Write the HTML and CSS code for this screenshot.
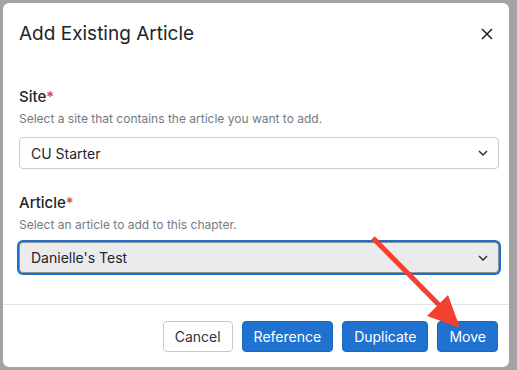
FILE: index.html
```html
<!DOCTYPE html>
<html lang="en">
  <head>
    <meta charset="UTF-8" />
    <title>Add Existing Article</title>
    <link rel="stylesheet" href="styles.css">
  </head>
  <body>
    <div class="modal">
      <div class="modal-header">
        <h2 class="modal-title">Add Existing Article</h2>
        <button class="modal-close" aria-label="Close">
          <svg width="12" height="12" viewBox="0 0 12 12">
            <path d="M1 1L11 11M11 1L1 11" stroke="#222" stroke-width="1.6" fill="none" />
          </svg>
        </button>
      </div>

      <div class="modal-body">
        <div class="form-group">
          <label class="form-label">Site<span class="form-required">*</span></label>
          <p class="form-help">Select a site that contains the article you want to add.</p>
          <div class="form-select">
            <span>CU Starter</span>
            <svg class="form-chevron" width="10" height="6" viewBox="0 0 10 6">
              <path d="M1 1L5 5L9 1" stroke="#333" stroke-width="1.5" fill="none" />
            </svg>
          </div>
        </div>

        <div class="form-group">
          <label class="form-label">Article<span class="form-required">*</span></label>
          <p class="form-help">Select an article to add to this chapter.</p>
          <div class="form-select form-select-focus">
            <span>Danielle's Test</span>
            <svg class="form-chevron" width="10" height="6" viewBox="0 0 10 6">
              <path d="M1 1L5 5L9 1" stroke="#333" stroke-width="1.5" fill="none" />
            </svg>
          </div>
        </div>
      </div>

      <div class="modal-footer">
        <button class="button-cancel">Cancel</button>
        <button class="button-primary">Reference</button>
        <button class="button-primary">Duplicate</button>
        <button class="button-primary">Move</button>
      </div>
    </div>

    <!-- annotation arrow drawn over the screenshot -->
    <svg class="arrow" width="517" height="370" viewBox="0 0 517 370">
      <line x1="373" y1="238" x2="446" y2="312" stroke="#f4402f" stroke-width="5" />
      <polygon points="427,316 448,295 460,328" fill="#f4402f" />
    </svg>
  </body>
</html>
```

FILE: styles.css
```css
* {
  margin: 0;
  padding: 0;
  box-sizing: border-box;
  font-family: "Inter", "Liberation Sans", sans-serif;
}

body {
  width: 517px;
  height: 370px;
  background-color: #a3a3a3;
  padding: 3px 8px 3px 3px;
  overflow: hidden;
  color: #212529;
}

.modal {
  width: 506px;
  height: 364px;
  background-color: white;
  border-radius: 6px;
  display: flex;
  flex-direction: column;
}

.modal-header {
  display: flex;
  align-items: center;
  justify-content: space-between;
  padding: 14px 14px 0 16px;
  height: 55px;
}

.modal-title {
  font-size: 19px;
  font-weight: 400;
  line-height: 24px;
  margin-top: -8px;
}

.modal-close {
  border: none;
  background: none;
  width: 16px;
  height: 16px;
  display: flex;
  align-items: center;
  justify-content: center;
  margin-top: -8px;
}

.modal-body {
  padding: 28px 10px 0 16px;
  flex: 1;
}

.form-group {
  margin-bottom: 23px;
}

.form-label {
  display: block;
  font-size: 15px;
  font-weight: 500;
  line-height: 22px;
}

.form-required {
  color: #e0443a;
}

.form-help {
  font-size: 12px;
  color: #737a81;
  line-height: 18px;
  margin-top: 2px;
}

.form-select {
  margin-top: 9px;
  height: 32px;
  border: 1px solid #c9ccd0;
  border-radius: 4px;
  display: flex;
  align-items: center;
  justify-content: space-between;
  padding: 0 10px 0 11px;
  font-size: 14px;
  color: #212529;
}

.form-select-focus {
  margin-top: 8px;
  height: 31px;
  background-color: #ebebee;
  border-color: #8d8f93;
  box-shadow: 0 0 0 2px #1d6fce;
}

.modal-footer {
  border-top: 1px solid #dee2e6;
  display: flex;
  justify-content: flex-end;
  gap: 9px;
  padding: 16px 11px 15px 16px;
}

.button-cancel,
.button-primary {
  height: 31px;
  padding: 0 11px;
  border-radius: 4px;
  font-size: 14px;
  cursor: pointer;
}

.button-cancel {
  background-color: white;
  border: 1px solid #c6c9cc;
  color: #333;
}

.button-primary {
  background-color: #1f72cf;
  border: 1px solid #1a68bf;
  color: white;
}

.arrow {
  position: absolute;
  top: 0;
  left: 0;
}
```
